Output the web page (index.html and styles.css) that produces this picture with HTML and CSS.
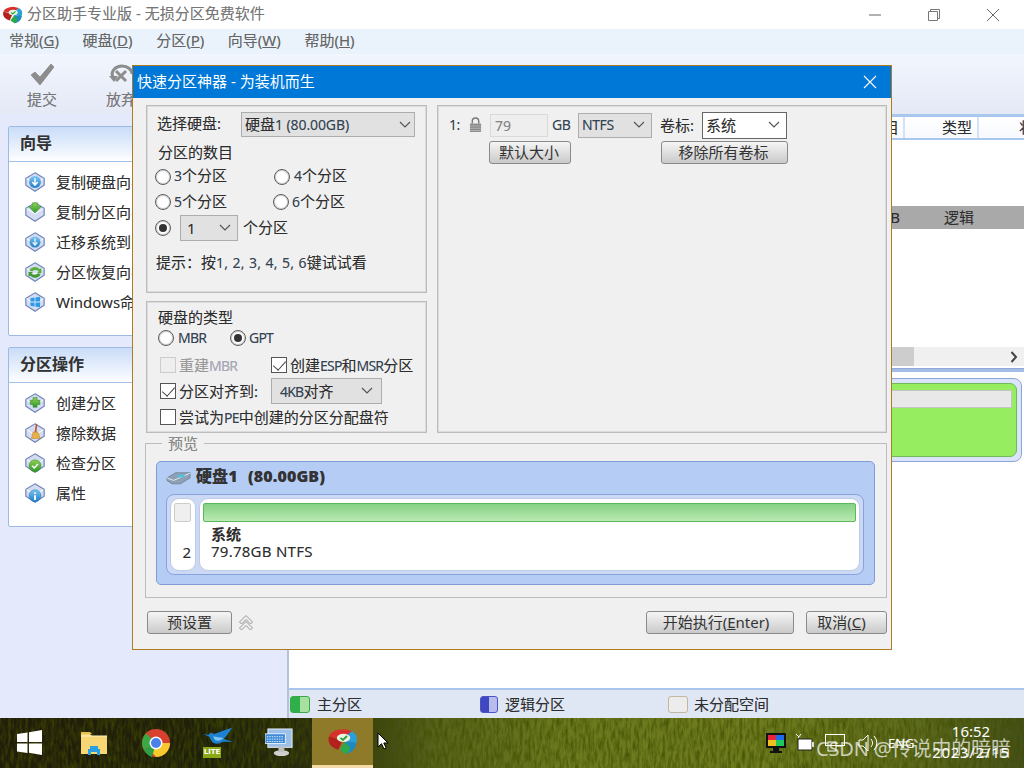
FILE: index.html
```html
<!DOCTYPE html>
<html lang="zh-CN">
<head>
<meta charset="utf-8">
<title>分区助手专业版</title>
<link rel="stylesheet" href="styles.css">
</head>
<body>
<svg class="defs" width="0" height="0" aria-hidden="true">
  <defs>
    <linearGradient id="gBlue" x1="0" y1="0" x2="0" y2="1"><stop offset="0" stop-color="#7cc4f2"/><stop offset="1" stop-color="#1f7fc8"/></linearGradient>
    <linearGradient id="gGreen" x1="0" y1="0" x2="0" y2="1"><stop offset="0" stop-color="#8fd14f"/><stop offset="1" stop-color="#2f9a2a"/></linearGradient>
    <filter id="grass" x="0" y="0" width="100%" height="100%">
      <feTurbulence type="fractalNoise" baseFrequency="0.35 0.09" numOctaves="3" seed="4"/>
      <feColorMatrix type="matrix" values="0 0 0 0 0.05  0 0 0 0 0.07  0 0 0 0 0  1.6 0 0 0 -0.55"/>
    </filter>
    <symbol id="disk" viewBox="0 0 24 24"><path d="M12 2 22 8v7.500L12 22 2 15.500V8Z" fill="#d3dcf0" stroke="#6f84b8" stroke-width="1.300"/><path d="M3 8.500 12 14l9-5.500" fill="none" stroke="#fff" stroke-width="1"/></symbol>
    <symbol id="pa" viewBox="0 0 30 26">
      <path d="M15 11 2 8A14 9 0 0 1 24 3Z" fill="#d8302c"/>
      <path d="M15 12 2 8C0 13 3 19 11 21Z" fill="#b3201d"/>
      <path d="M15 11 24 3A14 9 0 0 1 29 10L28 16Z" fill="#2a9fd8"/>
      <path d="M17 13 28 14C29 19 24 24 18 25Z" fill="#1f8ac0"/>
      <path d="M17 14 22 18C22 21 21 24 18 25 16 24 14 22 12 21Z" fill="#2fa84a"/>
      <ellipse cx="16" cy="9.500" rx="6.500" ry="4" fill="#e8f3e0"/>
      <path d="M13 9.500l2.400 2 4-3.800" fill="none" stroke="#2fa040" stroke-width="1.800"/>
    </symbol>
  </defs>
</svg>

<div class="app">
  <header class="titlebar">
    <svg class="title-logo"><use href="#pa"/></svg>
    <span class="title-text">分区助手专业版 - 无损分区免费软件</span>
    <div class="winctl">
      <svg class="wc" viewBox="0 0 14 14"><path d="M1 7h12" stroke="#666" fill="none"/></svg>
      <svg class="wc" viewBox="0 0 14 14"><path d="M1.500 3.500h9v9h-9ZM3.500 3.500v-2h9v9h-2" stroke="#777" fill="none"/></svg>
      <svg class="wc" viewBox="0 0 14 14"><path d="M1 1l12 12M13 1 1 13" stroke="#666" fill="none"/></svg>
    </div>
  </header>
  <nav class="menubar">
    <span>常规(<u>G</u>)</span><span>硬盘(<u>D</u>)</span><span>分区(<u>P</u>)</span><span>向导(<u>W</u>)</span><span>帮助(<u>H</u>)</span>
  </nav>
  <div class="toolbar">
    <div class="tool">
      <svg class="tool-ic" viewBox="0 0 28 24"><path d="M3 12l4-3 5 5L23 1l3 3L12 22Z" fill="#8d8d8d" stroke="#777" stroke-width=".6"/></svg>
      <span>提交</span>
    </div>
    <div class="tool">
      <svg class="tool-ic" viewBox="0 0 28 24"><path d="M6 14C3 8 9 3 15 3c6 0 10 4 10 8M9 8l10 10M19 8 9 18" fill="none" stroke="#8d8d8d" stroke-width="3"/><path d="M2 13h9l-4 6Z" fill="#8d8d8d"/></svg>
      <span>放弃</span>
    </div>
  </div>
  <main class="work">
    <aside class="sidebar">
      <section class="card card-a">
        <h2>向导</h2>
        <ul>
          <li><span class="ic"><svg viewBox="0 0 24 24"><use href="#disk"/><circle cx="12" cy="12" r="6.500" fill="url(#gBlue)"/><path d="M12 8v7M9 12l3 3.500 3-3.500" stroke="#fff" stroke-width="1.600" fill="none"/></svg></span>复制硬盘向导</li>
          <li><span class="ic"><svg viewBox="0 0 24 24"><use href="#disk"/><path d="M9 2h6v4h4l-7 7-7-7h4Z" fill="url(#gGreen)" stroke="#2a8a2a" stroke-width=".5"/></svg></span>复制分区向导</li>
          <li><span class="ic"><svg viewBox="0 0 24 24"><use href="#disk"/><circle cx="12" cy="12" r="6" fill="url(#gBlue)"/><path d="M12 8v7M9.500 12.500l2.500 3 2.500-3" stroke="#e8f4ff" stroke-width="1.400" fill="none"/></svg></span>迁移系统到固态</li>
          <li><span class="ic"><svg viewBox="0 0 24 24"><use href="#disk"/><path d="M6 11a6 5 0 0 1 11-2l2-1v5h-5l2-1.500a4 3 0 0 0-7 0Z" fill="#58b038"/><path d="M18 14a6 5 0 0 1-11 2l-2 1v-5h5l-2 1.500a4 3 0 0 0 7 0Z" fill="#3f9a30"/></svg></span>分区恢复向导</li>
          <li><span class="ic"><svg viewBox="0 0 24 24"><use href="#disk"/><path d="M7 8l4.500-.8v4.300H7ZM12.500 7l5-.8v5.300h-5ZM7 12.500h4.500v4.300L7 16ZM12.500 12.500h5v5.300l-5-.8Z" fill="#2a9ae8"/></svg></span>Windows命令</li>
        </ul>
      </section>
      <section class="card card-b">
        <h2>分区操作</h2>
        <ul>
          <li><span class="ic"><svg viewBox="0 0 24 24"><use href="#disk"/><path d="M9.500 8h5v3.500H18v5h-3.500V20h-5v-3.500H6v-5h3.500Z" fill="url(#gGreen)" stroke="#2a7a2a" stroke-width=".6" transform="translate(1.500 -1) scale(.88)"/></svg></span>创建分区</li>
          <li><span class="ic"><svg viewBox="0 0 24 24"><use href="#disk"/><path d="M13 2l1.500.5-1 9h-2Z" fill="#c0562a"/><path d="M10 11h5l3 7H8Z" fill="#e8b04a" stroke="#b07a20" stroke-width=".5"/></svg></span>擦除数据</li>
          <li><span class="ic"><svg viewBox="0 0 24 24"><use href="#disk"/><circle cx="12" cy="15" r="6.500" fill="url(#gGreen)" stroke="#2a7a2a" stroke-width=".5"/><path d="M8.800 15l2.400 2.400 4-4.400" stroke="#fff" stroke-width="1.700" fill="none"/></svg></span>检查分区</li>
          <li><span class="ic"><svg viewBox="0 0 24 24"><use href="#disk"/><circle cx="12" cy="15" r="6.500" fill="url(#gBlue)" stroke="#1c6cb0" stroke-width=".5"/><path d="M12 11.500v1.600M12 14.500v5" stroke="#fff" stroke-width="2" fill="none"/></svg></span>属性</li>
        </ul>
      </section>
    </aside>
    <section class="pane">
      <div class="thead">
        <span class="th th-1">目</span><span class="th th-2">类型</span><span class="th th-3">状</span>
      </div>
      <div class="row-sel"><span class="td-1">B</span><span class="td-2">逻辑</span></div>
      <div class="hscroll"><span class="hthumb"></span><svg class="harrow" viewBox="0 0 8 12"><path d="M1.500 1 6 6l-4.500 5" stroke="#444" stroke-width="2" fill="none"/></svg></div>
      <div class="hline"></div>
      <div class="map">
        <div class="map-in"><div class="map-strip"></div></div>
      </div>
      <footer class="legend">
        <span class="lg lg-1"><i class="sw sw-g"></i>主分区</span>
        <span class="lg lg-2"><i class="sw sw-b"></i>逻辑分区</span>
        <span class="lg lg-3"><i class="sw sw-u"></i>未分配空间</span>
      </footer>
    </section>
  </main>
  <div class="taskbar">
    <svg class="noise" width="1024" height="50"><rect width="1024" height="50" filter="url(#grass)"/></svg>
    <svg class="tb tb-win" viewBox="0 0 25 25"><path d="M0 4l10.500-1.500V12H0ZM12 2.300 25 0v12H12ZM0 13.500h10.500v9.500L0 21.500ZM12 13.500h13V25l-13-2.200Z" fill="#fff"/></svg>
    <svg class="tb tb-folder" viewBox="0 0 28 24"><path d="M1 3h9l2 2h15v18H1Z" fill="#f7d774"/><path d="M1 1h9l2 2H1Z" fill="#e8c050"/><path d="M1 5h26" stroke="#fff3c4"/><path d="M8 24v-6h2v-3h8v3h2v6h-3v-3h-6v3Z" fill="#2ba0e0"/></svg>
    <svg class="tb tb-chrome" viewBox="0 0 28 28"><circle cx="14" cy="14" r="14" fill="#d8402f"/><path d="M14 14 1.900 21A14 14 0 0 1 4 4.200L14 14Z" fill="#3aa845"/><path d="M14 14H28A14 14 0 0 1 14 28L8 21Z" fill="#f8c92f"/><path d="M1.900 21 14 14 10 28.100A14 14 0 0 1 1.900 21Z" fill="#2f9f45"/><circle cx="14" cy="14" r="6.500" fill="#fff"/><circle cx="14" cy="14" r="5" fill="#4a80e8"/></svg>
    <span class="tb tb-lite">
      <svg viewBox="0 0 32 22"><path d="M0 7 6 7.500C7 5 10 5 12 7 15 5 22 3 31 0 28 5 25 9 22 12L32 15 21 15C17 18 11 18 9 14 8 12 7 10 6 9Z" fill="#1e80d0"/><path d="M11 9c3 1 7 1 11 2-3 3-8 4-10 1Z" fill="#7cc4f2"/></svg>
      <b>LITE</b>
    </span>
    <svg class="tb tb-mon" viewBox="0 0 30 30"><rect x="3" y="1" width="25" height="19" fill="#9cc0e8" stroke="#e8eef8"/><rect x="0" y="6" width="21" height="10" fill="#3f8ad8" stroke="#fff" stroke-width=".8"/><path d="M2 9h17M2 11.500h17M2 14h17" stroke="#dcecff" stroke-dasharray="1.500 1"/><ellipse cx="17" cy="26" rx="8" ry="3" fill="#d0d0d0"/><rect x="14" y="19" width="6" height="6" fill="#c0c0c0"/></svg>
    <div class="tb tb-active"><svg viewBox="0 0 30 26"><use href="#pa"/></svg></div>
    <svg class="cursor" viewBox="0 0 12 18"><path d="M1 1v14l3.500-3.300L7 17l2.200-1-2.400-5H11Z" fill="#fff" stroke="#000"/></svg>
    <div class="tray">
      <svg class="tr tr-color" viewBox="0 0 20 20"><rect width="20" height="15" fill="#111"/><path d="M2 2h8v5H2Z" fill="#e8243c"/><path d="M10 2h8v5h-8Z" fill="#1e6ae8"/><path d="M2 7h8v6H2Z" fill="#f0c020"/><path d="M10 7h8v6h-8Z" fill="#20c860"/><path d="M7 15h6v3h3v2H4v-2h3Z" fill="#111"/></svg>
      <svg class="tr tr-bat" viewBox="0 0 20 20"><path d="M1 1l3 3M6 1 3 5" stroke="#fff"/><rect x="3" y="6" width="14" height="11" fill="#fff" stroke="#222"/><rect x="17" y="9" width="2" height="5" fill="#ddd"/></svg>
      <svg class="tr tr-net" viewBox="0 0 20 20"><rect x=".5" y="1.500" width="19" height="11" fill="none" stroke="#fff"/><rect x="3" y="9" width="8" height="9" fill="none" stroke="#fff"/><path d="M11 13h6" stroke="#fff"/></svg>
      <svg class="tr tr-vol" viewBox="0 0 22 20"><path d="M1 7h4l5-5v16l-5-5H1Z" fill="none" stroke="#fff"/><path d="M13 6a6 6 0 0 1 0 8M16 3a10 10 0 0 1 0 14" fill="none" stroke="#fff"/></svg>
      <span class="eng">ENG</span>
      <div class="clock"><span>16:52</span><span class="date">2023/2/15</span></div>
    </div>
    <span class="watermark">CSDN @传说中的暗暗</span>
  </div>

  <div class="dialog">
    <div class="dlg-title"><span class="dlg-cap">快速分区神器 - 为装机而生</span>
      <svg class="dlg-x" viewBox="0 0 14 14"><path d="M1 1l12 12M13 1 1 13" stroke="#fff" stroke-width="1.100" fill="none"/></svg>
    </div>
    <div class="dlg-body">
      <div class="dlg-top">
        <div class="dlg-left">
          <section class="panel p-disk">
            <div class="flex-row r-choose">
              <label class="lab-disk">选择硬盘:</label>
              <span class="sel sel-disk"><span>硬盘<span class="nr4">1 (80.00GB)</span></span><svg class="chev" viewBox="0 0 12 8"><path d="M1 1l5 5 5-5" fill="none" stroke="#555" stroke-width="1.200"/></svg></span>
            </div>
            <div class="sub-title">分区的数目</div>
            <div class="flex-row r-radio r1"><span class="radio"></span><span class="t-after w-a"><span class="dg">3</span>个分区</span><span class="radio"></span><span class="t-after t-b"><span class="dg">4</span>个分区</span></div>
            <div class="flex-row r-radio r2"><span class="radio"></span><span class="t-after w-a"><span class="dg">5</span>个分区</span><span class="radio r-6"></span><span class="t-after"><span class="dg">6</span>个分区</span></div>
            <div class="flex-row r-radio r3"><span class="radio on"></span><span class="sel sel-n">1<svg class="chev" viewBox="0 0 12 8"><path d="M1 1l5 5 5-5" fill="none" stroke="#555" stroke-width="1.200"/></svg></span><span class="t-n">个分区</span></div>
            <div class="hint">提示：按<span class="nr2">1, 2, 3, 4, 5, 6</span>键试试看</div>
          </section>
          <section class="panel p-type">
            <div class="sub-title st2">硬盘的类型</div>
            <div class="flex-row r-type"><span class="radio"></span><span class="t-mbr nr">MBR</span><span class="radio on"></span><span class="t-gpt nr">GPT</span></div>
            <div class="flex-row r-c1"><span class="check off"></span><span class="t-c w-r dis">重建<span class="nr">MBR</span></span><span class="check on"></span><span class="t-c">创建<span class="nr">ESP</span>和<span class="nr">MSR</span>分区</span></div>
            <div class="flex-row r-c2"><span class="check on"></span><span class="t-c w-al">分区对齐到:</span><span class="sel sel-al"><span><span class="nr">4KB</span>对齐</span><svg class="chev" viewBox="0 0 12 8"><path d="M1 1l5 5 5-5" fill="none" stroke="#555" stroke-width="1.200"/></svg></span></div>
            <div class="flex-row r-c3"><span class="check"></span><span class="t-c">尝试为<span class="nr">PE</span>中创建的分区分配盘符</span></div>
          </section>
        </div>
        <section class="panel p-right">
          <div class="flex-row rr1">
            <span class="t-1 nr3">1:</span>
            <svg class="lock" viewBox="0 0 14 17"><path d="M3.500 7V4.500a3.500 3.500 0 0 1 7 0V7" fill="none" stroke="#777" stroke-width="1.500"/><rect x="1" y="7" width="12" height="9" fill="#888"/><path d="M1 9.500h12M1 12h12M1 14.500h12" stroke="#ccc" stroke-width=".7"/></svg>
            <span class="inp">79</span>
            <span class="t-gb nr3">GB</span>
            <span class="sel sel-fs"><span class="nr3">NTFS</span><svg class="chev" viewBox="0 0 12 8"><path d="M1 1l5 5 5-5" fill="none" stroke="#555" stroke-width="1.200"/></svg></span>
            <span class="t-vol">卷标:</span>
            <span class="sel sel-vol">系统<svg class="chev" viewBox="0 0 12 8"><path d="M1 1l5 5 5-5" fill="none" stroke="#555" stroke-width="1.200"/></svg></span>
          </div>
          <div class="flex-row rr2">
            <button class="btn b-def">默认大小</button>
            <button class="btn b-rm">移除所有卷标</button>
          </div>
        </section>
      </div>
      <section class="preview">
        <span class="legend-t">预览</span>
        <div class="pv-box">
          <div class="pv-head">
            <svg class="pv-ic" viewBox="0 0 26 14"><path d="M1 7 10 1.500h15V7l-10 6H6L1 9.500Z" fill="#8fa0b4" stroke="#5a6a7e" stroke-width=".6"/><path d="M1 7l7 2.500L25 2" fill="none" stroke="#e4ecf4"/><rect x="11" y="3.500" width="7" height="3" fill="#52c4e0" transform="skewX(-30) translate(4 0)"/></svg>
            <b>硬盘1 (80.00GB)</b>
          </div>
          <div class="pv-tray">
            <div class="pv-small"><span class="chip"></span><span class="num">2</span></div>
            <div class="pv-main">
              <div class="bar"></div>
              <div class="pv-name">系统</div>
              <div class="pv-size">79.78GB NTFS</div>
            </div>
          </div>
        </div>
      </section>
      <div class="dlg-foot">
        <button class="btn b-pre">预设置</button>
        <svg class="chev2" viewBox="0 0 16 18"><path d="M1.500 8 8 1.500 14.500 8 12.500 10 8 5.500 3.500 10ZM1.500 14 8 7.500 14.500 14 12.500 16 8 11.500 3.500 16Z" fill="#eee" stroke="#999"/></svg>
        <button class="btn b-go">开始执行(<u>E</u>nter)</button>
        <button class="btn b-no">取消(<u>C</u>)</button>
      </div>
    </div>
  </div>
</div>
</body>
</html>
```
FILE: styles.css
```css
* { box-sizing: border-box; }
html, body { margin: 0; padding: 0; }
body {
  width: 1024px; height: 768px; overflow: hidden;
  font: 15px/20px "Noto Sans", "Noto Sans CJK SC", sans-serif;
  color: #2e2e2e; background: #fff;
  text-shadow: 0 0 .6px rgba(0,0,0,.25);
}
.defs { position: absolute; }
.app { position: relative; width: 1024px; height: 768px; display: flex; flex-direction: column; }

.titlebar { height: 29px; flex: none; display: flex; align-items: center; background: #fff; }
.title-logo { width: 21px; height: 18px; margin-left: 2px; }
.title-text { margin: 0 0 3px 4px; color: #777; }
.winctl { margin-left: auto; display: flex; align-items: center; }
.wc { width: 14px; height: 14px; display: block; margin-right: 45px; }
.wc:last-child { margin-right: 24px; }

.menubar { height: 25px; flex: none; display: flex; gap: 23.600px; padding: 0 0 3px 9px; background: #eaf3fb; color: #666; align-items: center; }
.menubar u { text-decoration: underline; }

.toolbar { height: 60px; flex: none; display: flex; padding-left: 27px; gap: 49px; background: linear-gradient(#f1f6fe, #e5e9f6); }
.tool { display: flex; flex-direction: column; align-items: center; width: 30px; color: #777; padding-top: 9px; }
.tool-ic { width: 28px; height: 24px; display: block; margin-bottom: 2px; flex: none; }

.work { height: 604px; flex: none; display: flex; }
.sidebar { width: 287px; flex: none; background: #e4eafb; padding: 12px 0 0 8px; }
.card { width: 270px; background: #fff; border: 1px solid #9dbbe2; border-radius: 2px; }
.card-a { height: 210px; }
.card-b { height: 180px; margin-top: 11px; }
.card h2 {
  margin: 0; height: 35px; font-size: 16px; line-height: 33px; font-weight: 700; color: #333;
  padding-left: 11px; background: linear-gradient(#c9dcf8, #fdfeff); border-bottom: 1px solid #a3c0e6;
}
.card ul { list-style: none; margin: 0; padding: 5px 0 0 15px; }
.card li { height: 30px; display: flex; align-items: center; white-space: nowrap; }
.ic { width: 22px; height: 22px; margin-right: 10px; display: block; flex: none; }
.ic svg { width: 22px; height: 22px; display: block; }

.pane { flex: 1; min-width: 0; display: flex; flex-direction: column; border-left: 2px solid #b3c4d8; background: #fff; overflow: hidden; }
.thead { height: 26px; flex: none; display: grid; grid-template-columns: 616px 74px 1fr; border-top: 3px solid #a9c8ee; border-bottom: 2px solid #a9c8ee; background: linear-gradient(#fff, #f6f9fd); }
.th { text-align: right; padding-right: 4px; line-height: 21px; border-right: 2px solid #d3e2f4; overflow: hidden; }
.th-2 { padding-right: 5px; }
.th-3 { border: 0; text-align: left; padding-left: 40px; }
.row-sel { height: 23px; margin-top: 66px; flex: none; background: #a9a9a9; display: grid; grid-template-columns: 616px 74px 1fr; line-height: 22px; }
.td-1 { text-align: right; padding-right: 5px; }
.td-2 { text-align: right; padding-right: 5px; }
.hscroll { height: 19px; margin-top: 118px; flex: none; background: #f0f0f0; display: flex; align-items: center; justify-content: flex-end; position: relative; }
.hthumb { position: absolute; left: 0; top: 0; bottom: 0; width: 625px; background: #cdcdcd; }
.harrow { width: 8px; height: 12px; margin-right: 6px; }
.hline { height: 4px; margin-top: 2px; flex: none; background: #a5bde6; border-top: 1px solid #8fa8da; }
.map { height: 84px; margin-top: 6px; margin-right: 2px; flex: none; padding: 4px 4px 4px 0; background: #dbe5f9; border: 1px solid #8da4da; border-radius: 8px; }
.map-in { height: 100%; background: #96ed60; border: 1px solid #72b85a; border-radius: 7px; padding: 6px 4px 0 0; }
.map-strip { height: 18px; background: #e8e8e8; border: 1px solid #c4c4c4; }
.legend { height: 30px; margin-top: auto; flex: none; background: #dfe6f4; border-top: 2px solid #a8c6ec; display: flex; align-items: center; padding-left: 1px; }
.lg { display: flex; align-items: center; }
.lg-1 { width: 190px; }
.lg-2 { width: 188px; }
.sw { width: 20px; height: 17px; margin-right: 7px; border-radius: 3px; display: block; }
.sw-g { background: linear-gradient(90deg, #2eb04a 50%, #a8e0a0 50%); border: 1px solid #3aa84a; }
.sw-b { width: 18px; background: linear-gradient(90deg, #3f48c0 50%, #b8bcec 50%); border: 1px solid #4a54c8; }
.sw-u { margin-right: 6px; background: #ececec; border: 1px solid #c4b6a0; }

.taskbar { height: 50px; flex: none; position: relative; overflow: hidden; text-shadow: none; background: linear-gradient(90deg, #221c0a 0, #1f1f0a 20%, #2c300e 33%, #56621a 42%, #6c7a1e 55%, #6e7c1e 75%, #5c6a1c 90%, #44501a 100%); }
.noise { position: absolute; left: 0; top: 0; }
.tb { position: absolute; display: block; }
.tb-win { left: 17px; top: 12px; width: 25px; height: 25px; }
.tb-folder { left: 80px; top: 13px; width: 28px; height: 24px; }
.tb-chrome { left: 142px; top: 11px; width: 28px; height: 28px; }
.tb-lite { left: 203px; top: 9px; width: 30px; height: 31px; }
.tb-lite svg { width: 30px; height: 22px; display: block; }
.tb-lite b { position: absolute; left: 0; bottom: 0; width: 18px; height: 11px; background: #8aa818; color: #fff; font: 700 7px/11px "DejaVu Sans", sans-serif; text-align: center; }
.tb-mon { left: 265px; top: 10px; width: 29px; height: 29px; }
.tb-active { left: 312px; top: 0; width: 61px; height: 50px; background: #8f7a2a; border-bottom: 3px solid #f5d9a8; display: flex; align-items: center; justify-content: center; }
.tb-active svg { width: 31px; height: 27px; }
.cursor { position: absolute; left: 377px; top: 14px; width: 12px; height: 18px; }
.tray { position: absolute; left: 766px; top: 0; right: 0; height: 50px; }
.tr { position: absolute; top: 15px; width: 20px; height: 20px; }
.tr-color { left: 0; }
.tr-bat { left: 29px; }
.tr-net { left: 59px; }
.tr-vol { left: 92px; width: 22px; }
.eng { position: absolute; left: 122px; top: 15px; color: #fff; font-size: 13px; }
.clock { position: absolute; right: 14px; top: 3px; width: 78px; color: #fff; text-align: center; display: flex; flex-direction: column; line-height: 21px; font-size: 15px; white-space: nowrap; }
.date { letter-spacing: .7px; }
.watermark { position: absolute; left: 816px; top: 20px; color: rgba(255,255,255,.7); font-size: 20px; line-height: 22px; white-space: nowrap; letter-spacing: -.15px; }

.dialog { position: absolute; left: 132px; top: 65px; width: 760px; height: 585px; border: 1px solid #b07a20; background: #f0f0f0; display: flex; flex-direction: column; }
.dlg-title { height: 32px; flex: none; background: #0078d7; color: #fff; text-shadow: none; line-height: 20px; padding-left: 4px; display: flex; justify-content: space-between; align-items: center; }
.dlg-cap { margin-bottom: 3px; }
.dlg-x { width: 14px; height: 14px; margin-right: 14px; }
.dlg-body { flex: 1; padding: 7px 4px 0 12px; display: flex; flex-direction: column; }
.dlg-top { display: flex; gap: 10px; height: 328px; padding-left: 1px; flex: none; }
.dlg-left { width: 281px; display: flex; flex-direction: column; gap: 8px; flex: none; }
.panel { border: 1px solid #bcbcbc; box-shadow: inset 0 0 0 1px #dcdcdc; }
.p-disk { height: 188px; padding: 6px 0 0 8px; }
.p-type { height: 132px; padding: 5px 0 0 11px; }
.p-right { flex: 1; padding: 6px 0 0 10px; }
.flex-row { display: flex; align-items: center; }

.sel { display: flex; align-items: center; justify-content: space-between; background: #e1e1e1; border: 1px solid #adadad; position: relative; white-space: nowrap; }
.chev { width: 12px; height: 8px; flex: none; }
.r-choose { height: 25px; }
.lab-disk { width: 84px; margin: 0 0 3px 2px; }
.sel-disk { width: 174px; height: 25px; padding: 0 3px 0 3px; }
.sub-title { margin: 5px 0 0 3px; height: 22px; }
.st2 { margin: 0; height: 19px; }
.radio { width: 16px; height: 16px; border: 1px solid #5c5c5c; border-radius: 50%; background: #fff; box-shadow: inset 0 0 0 1px #cfcfcf; flex: none; display: block; position: relative; }
.radio.on::after { content: ""; position: absolute; left: 3px; top: 3px; width: 8px; height: 8px; border-radius: 50%; background: #333; }
.r-radio { margin-left: 0; height: 26px; }
.r1 { height: 25px; }
.t-after { margin: 0 0 2px 3px; }
.t-b { margin-left: 4px; }
.w-a { width: 100px; }
.r-6 { margin-left: -1px; }
.dg { font-size: 14px; color: #345; }
.nr { letter-spacing: -.800px; font-size: 14px; color: #345; }
.nr2 { letter-spacing: .200px; font-size: 14px; color: #345; }
.nr3 { font-size: 14px; letter-spacing: -.4px; color: #345; }
.nr4 { font-size: 14px; letter-spacing: -.1px; color: #345; }
.sel-n { width: 58px; height: 26px; margin-left: 9px; padding: 0 6px 0 6px; }
.t-n { margin: 0 0 2px 5px; }
.hint { margin: 11px 0 0 1px; white-space: nowrap; word-spacing: .5px; }
.r-type { height: 24px; }
.t-mbr { margin-left: 4px; width: 52px; }
.t-gpt { margin-left: 3px; }
.check { width: 16px; height: 16px; border: 1px solid #555; background: #fff; flex: none; display: block; position: relative; }
.check.off { border-color: #ccc; background: #eee; }
.check.on::after { content: ""; position: absolute; left: 4px; top: 0; width: 6px; height: 11px; border: solid #444; border-width: 0 1.500px 1.500px 0; transform: rotate(42deg); }
.t-c { margin-left: 3px; white-space: nowrap; }
.w-r { width: 92px; }
.dis { color: #999; }
.dis .nr { color: #aab; }
.w-al { width: 92px; }
.r-c1 { margin: 2px 0 0 2px; height: 26px; }
.r-c2 { margin: 0 0 0 2px; height: 26px; }
.r-c3 { margin: 0 0 0 2px; height: 26px; }
.sel-al { width: 111px; height: 26px; padding: 0 8px 0 8px; }

.rr1 { height: 26px; }
.t-1 { width: 20px; margin-left: 1px; }
.lock { width: 13px; height: 16px; }
.inp { width: 58px; height: 23px; margin-left: 8px; border: 1px solid #d9d9d9; background: #eee; color: #888; font-size: 14px; line-height: 21px; padding-left: 4px; }
.t-gb { margin-left: 4px; width: 26px; }
.sel-fs { width: 74px; height: 25px; padding: 0 6px 0 3px; }
.t-vol { margin: 0 0 1px 8px; width: 42px; }
.sel-vol { width: 85px; height: 27px; background: #fff; border-color: #666; padding: 0 6px 0 3px; }
.rr2 { margin-top: 3px; }
.btn { font: inherit; color: #333; padding: 0; height: 23px; line-height: 21px; background: linear-gradient(#f5f5f5, #cacaca); border: 1px solid #8a8a8a; border-radius: 3px; display: block; }
.b-def { width: 82px; margin-left: 41px; padding-right: 2px; }
.b-rm { width: 127px; margin-left: 90px; padding-right: 2px; }

.preview { position: relative; height: 155px; margin-top: 10px; border: 1px solid #bcbcbc; padding: 17px 0 0 10px; flex: none; }
.legend-t { position: absolute; left: 16px; top: -11px; padding: 0 6px; background: #f0f0f0; color: #888; }
.pv-box { width: 719px; height: 124px; background: #b5ccf4; border: 1px solid #7f9bd8; border-radius: 5px; padding: 0 0 0 9px; }
.pv-head { height: 32px; display: flex; align-items: center; font-weight: 700; color: #333; }
.pv-head b { margin: 0 0 4px 5px; font-size: 16px; word-spacing: 6px; letter-spacing: .1px; }
.pv-ic { width: 25px; height: 14px; }
.pv-tray { width: 698px; height: 81px; border: 1px solid #87a2de; border-radius: 8px; background: #ccd9f5; padding: 3px; display: flex; gap: 3px; }
.pv-small { width: 26px; height: 73px; background: #fff; border: 1px solid #bfcbe6; border-radius: 9px; padding: 4px 0 0 3px; position: relative; }
.chip { display: block; width: 17px; height: 19px; background: #efefef; border: 1px solid #ccc; border-radius: 2px; }
.num { position: absolute; right: 4px; bottom: 9px; line-height: 18px; }
.pv-main { flex: 1; height: 73px; background: #fff; border: 1px solid #bfcbe6; border-radius: 9px; padding: 4px 3px 0 3px; }
.bar { height: 19px; background: linear-gradient(#84d284, #bbe9b2); border: 1px solid #5cb85c; border-radius: 2px; }
.pv-name { margin: 3px 0 0 8px; font-weight: 700; line-height: 18px; }
.pv-size { margin-left: 8px; line-height: 17px; letter-spacing: .25px; }
.dlg-foot { display: flex; align-items: center; margin-top: 13px; padding-left: 2px; }
.b-pre { width: 85px; }
.chev2 { width: 16px; height: 18px; margin-left: 6px; }
.b-go { width: 148px; margin-left: auto; padding-right: 8px; }
.b-no { width: 81px; margin-left: 12px; padding-right: 10px; }
```
